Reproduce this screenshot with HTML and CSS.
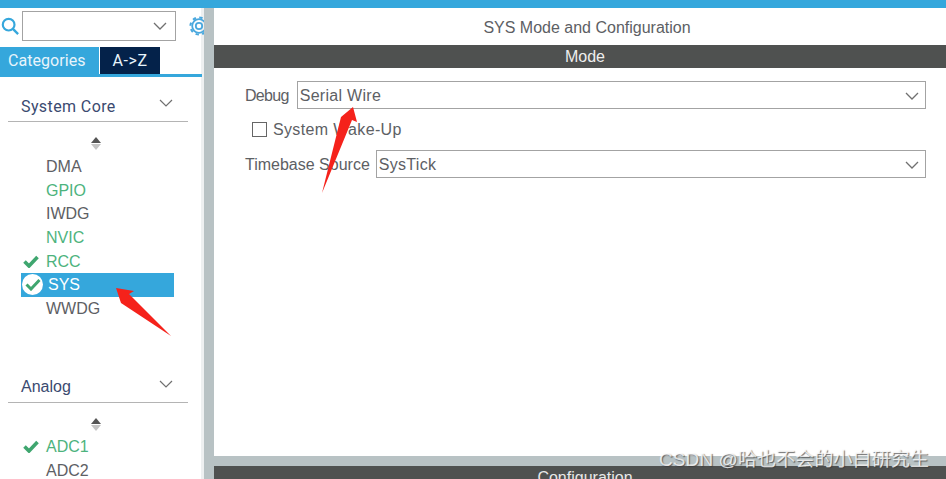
FILE: index.html
```html
<!DOCTYPE html>
<html lang="en">
<head>
    <meta charset="UTF-8">
    <title>SYS Mode and Configuration</title>
    <link rel="stylesheet" href="styles.css">
</head>
<body>

<div class="topbar"></div>

<div class="app">

    <div class="sidebar">
        <div class="search-row">
            <svg class="search-icon" width="18" height="18" viewBox="0 0 20 20"><circle cx="8.5" cy="8.5" r="6.5" fill="none" stroke="#35a7dc" stroke-width="2.4"/><path d="M13 13l6 6" stroke="#35a7dc" stroke-width="2.6" fill="none"/></svg>
            <div class="search-box">
                <svg class="chevron" width="14" height="8" viewBox="0 0 14 8"><path d="M1 1l6 6 6-6" fill="none" stroke="#707070" stroke-width="1.3"/></svg>
            </div>
            <svg class="gear" width="20" height="20" viewBox="0 0 20 20"><circle cx="10" cy="10" r="3.2" fill="none" stroke="#4aa8de" stroke-width="1.8"/><circle cx="10" cy="10" r="6.8" fill="none" stroke="#4aa8de" stroke-width="1.8"/><circle cx="10" cy="10" r="8.6" fill="none" stroke="#4aa8de" stroke-width="2" stroke-dasharray="3.4 3.35"/></svg>
        </div>

        <div class="tabs">
            <div class="tab tab-active">Categories</div>
            <div class="tab tab-dark">A-&gt;Z</div>
        </div>

        <div class="group-head">
            <span>System Core</span>
            <svg width="14" height="8" viewBox="0 0 14 8"><path d="M1 1l6 6 6-6" fill="none" stroke="#707070" stroke-width="1.2"/></svg>
        </div>
        <div class="sort-arrows"><span class="up"></span><span class="down"></span></div>
        <ul class="list">
            <li>DMA</li>
            <li class="green">GPIO</li>
            <li>IWDG</li>
            <li class="green">NVIC</li>
            <li class="green">
                <svg class="check" width="16" height="13" viewBox="0 0 16 13"><path d="M1.500 6.500l4.500 4.500 8.500-9" fill="none" stroke="#3fa66f" stroke-width="3.6"/></svg>
                RCC
            </li>
            <li class="selected">
                <span class="check-round"><svg width="16" height="13" viewBox="0 0 16 13"><path d="M1.500 6.500l4.500 4.500 8.500-9" fill="none" stroke="#3fa66f" stroke-width="3"/></svg></span>
                SYS
            </li>
            <li>WWDG</li>
        </ul>

        <div class="group-head group-analog">
            <span>Analog</span>
            <svg width="14" height="8" viewBox="0 0 14 8"><path d="M1 1l6 6 6-6" fill="none" stroke="#707070" stroke-width="1.2"/></svg>
        </div>
        <div class="sort-arrows"><span class="up"></span><span class="down"></span></div>
        <ul class="list">
            <li class="green">
                <svg class="check" width="16" height="13" viewBox="0 0 16 13"><path d="M1.500 6.500l4.500 4.500 8.500-9" fill="none" stroke="#3fa66f" stroke-width="3.6"/></svg>
                ADC1
            </li>
            <li>ADC2</li>
        </ul>
    </div>

    <div class="splitter"></div>

    <div class="main">
        <div class="main-title">SYS Mode and Configuration</div>
        <div class="bar">Mode</div>

        <div class="mode-form">
            <div class="form-row">
                <label class="label-debug">Debug</label>
                <div class="select">Serial Wire
                    <svg width="14" height="8" viewBox="0 0 14 8"><path d="M1 1l6 6 6-6" fill="none" stroke="#707070" stroke-width="1.3"/></svg>
                </div>
            </div>
            <div class="check-row">
                <span class="checkbox"></span>
                <span>System Wake-Up</span>
            </div>
            <div class="form-row">
                <label class="label-timebase">Timebase Source</label>
                <div class="select">SysTick
                    <svg width="14" height="8" viewBox="0 0 14 8"><path d="M1 1l6 6 6-6" fill="none" stroke="#707070" stroke-width="1.3"/></svg>
                </div>
            </div>
        </div>

        <div class="bottom-split"></div>
        <div class="bar bar-bottom">Configuration</div>
    </div>
</div>

<!-- red arrows pasted on top of the screenshot -->
<svg class="arrow arrow-sys" width="56" height="50" viewBox="0 0 56 50"><path d="M0 0L18 3 13 6 55 48 5 15z" fill="#f5221b"/></svg>
<svg class="arrow arrow-debug" width="36" height="90" viewBox="0 0 36 90"><path d="M31 2L35 17 30 15 0 88 19 12z" fill="#f5221b"/></svg>

<div class="watermark">CSDN @哈也不会的小白研究生</div>

</body>
</html>
```

FILE: styles.css
```css
html, body {
    margin: 0;
    height: 100%;
    overflow: hidden;
}

body {
    position: relative;
    font-family: "Liberation Sans", Arial, sans-serif;
    background-color: #fff;
    color: #5d6064;
    font-size: 16px;
}

.topbar {
    height: 8px;
    background-color: #35a7dc;
}

.app {
    display: flex;
    height: 471px;
}

/* left column */
.sidebar {
    width: 204px;
    flex-shrink: 0;
    overflow: hidden;
    box-shadow: inset -3px 0 #eef0f1;
}

.search-row {
    display: flex;
    align-items: center;
    height: 36px;
}

.search-icon {
    margin-left: 1px;
    flex-shrink: 0;
}

.search-box {
    width: 144px;
    height: 28px;
    margin-left: 3px;
    border: 1px solid #a3a3a3;
    display: flex;
    align-items: center;
    justify-content: flex-end;
    padding-right: 8px;
    flex-shrink: 0;
}

.gear {
    margin-left: 13px;
    flex-shrink: 0;
}

.tabs {
    display: flex;
    width: 202px;
    height: 27px;
    margin-top: 3px;
    border-bottom: 3px solid #35a7dc;
}

.tab {
    height: 27px;
    line-height: 27px;
    text-align: center;
    font-family: Roboto, "Liberation Sans", sans-serif;
    color: #e8f4fb;
}

.tab-active {
    width: 91px;
    padding-left: 8px;
    text-align: left;
    background-color: #35a7dc;
    letter-spacing: 0.05px;
}

.tab-dark {
    width: 60px;
    margin-left: 1px;
    background-color: #04224a;
    letter-spacing: 0.6px;
}

.group-head {
    display: flex;
    justify-content: space-between;
    align-items: center;
    width: 180px;
    height: 31px;
    margin: 14px 0 0 8px;
    padding: 0 0 0 13px;
    box-sizing: border-box;
    border-bottom: 1px solid #b4b4b4;
    color: #3b4a70;
    font-family: Roboto, "Liberation Sans", sans-serif;
    letter-spacing: 0.4px;
}

.group-head svg {
    margin: 0 15px 6px 0;
}

.group-analog {
    margin-top: 51px;
    font-family: "Liberation Sans", sans-serif;
    letter-spacing: 0;
}

.sort-arrows {
    display: flex;
    flex-direction: column;
    align-items: center;
    gap: 1px;
    width: 12px;
    margin: 15px 0 5px 90px;
}

.group-analog + .sort-arrows {
    margin-bottom: 4px;
}

.sort-arrows .up {
    border-left: 5px solid transparent;
    border-right: 5px solid transparent;
    border-bottom: 6px solid #555;
}

.sort-arrows .down {
    border-left: 5px solid transparent;
    border-right: 5px solid transparent;
    border-top: 6px solid #c4c4c4;
}

.list {
    list-style: none;
    margin: 0;
    padding: 0 0 0 21px;
}

.list li {
    position: relative;
    width: 153px;
    height: 23.7px;
    line-height: 24px;
    padding-left: 25px;
    box-sizing: border-box;
}

.list li.green {
    color: #4db37d;
}

.list li .check {
    position: absolute;
    left: 2px;
    top: 5px;
}

.list li.selected {
    background-color: #35a7dc;
    color: #fff;
    padding-left: 27px;
}

.check-round {
    position: absolute;
    left: 1px;
    top: 1px;
    width: 21px;
    height: 21px;
    border-radius: 50%;
    background-color: #fff;
    display: flex;
    align-items: center;
    justify-content: center;
}

/* grey divider between the columns */
.splitter {
    width: 10px;
    flex-shrink: 0;
    background-color: #b8c2c4;
}

.main {
    flex: 1;
    display: flex;
    flex-direction: column;
    min-width: 0;
}

.main-title {
    height: 37px;
    line-height: 40px;
    text-align: center;
    box-sizing: border-box;
    padding-left: 14px;
}

.bar {
    height: 23px;
    line-height: 23px;
    background-color: #4f5150;
    color: #eee;
    text-align: center;
    flex-shrink: 0;
    padding-left: 10px;
}

.mode-form {
    flex: 1;
    padding: 13px 20px 0 31px;
}

.form-row {
    display: flex;
    align-items: center;
    gap: 5px;
    height: 28px;
}

.form-row label {
    padding-top: 1px;
}

.label-debug {
    letter-spacing: -0.7px;
    margin-right: 3px;
}

.label-timebase {
    margin-right: 1px;
}

.select {
    flex: 1;
    height: 25px;
    line-height: 25px;
    border: 1px solid #a3a3a3;
    padding: 1px 6px 0 2px;
    display: flex;
    justify-content: space-between;
    align-items: center;
    letter-spacing: 0.3px;
}

.check-row {
    display: flex;
    align-items: center;
    gap: 6px;
    height: 41px;
    margin-left: 7px;
    letter-spacing: 0.35px;
}

.checkbox {
    width: 13px;
    height: 13px;
    border: 1px solid #666;
}

.bottom-split {
    height: 10px;
    background-color: #b8c2c4;
    flex-shrink: 0;
}

.bar-bottom {
    height: 13px;
    line-height: 23px;
    overflow: hidden;
    color: #e8e8e8;
}

.arrow {
    position: absolute;
}

.arrow-sys {
    left: 116px;
    top: 288px;
}

.arrow-debug {
    left: 322px;
    top: 105px;
}

.watermark {
    position: absolute;
    left: 659px;
    top: 449px;
    font-family: "Liberation Sans", "Noto Sans CJK SC", sans-serif;
    font-size: 19px;
    line-height: 22px;
    letter-spacing: 0.1px;
    color: rgba(255, 255, 255, 0.8);
    text-shadow: 1px 1px 1px rgba(60, 60, 60, 0.75);
    white-space: nowrap;
}
```
